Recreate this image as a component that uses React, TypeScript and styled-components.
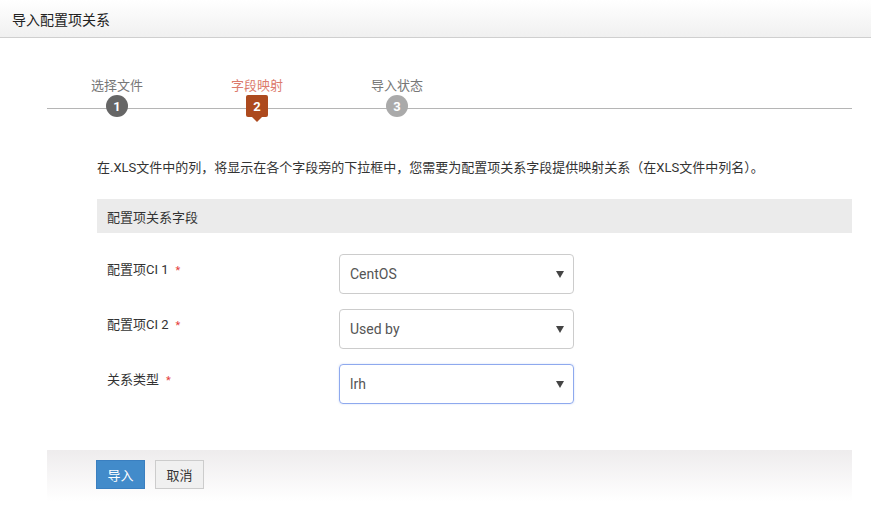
import styled, { createGlobalStyle } from "styled-components";

const GlobalStyle = createGlobalStyle`
    html, body {
        margin: 0;
        padding: 0;
        background: #fff;
        font-family: Roboto, "Noto Sans CJK SC", sans-serif;
        color: #333;
    }
`

const Page = styled.div`
    width: 871px;
    height: 531px;
    overflow: hidden;
    background: #fff;
`

const Header = styled.div`
    height: 37px;
    border-bottom: 1px solid #cfcfcf;
    background: linear-gradient(#ffffff, #f0f0f0);
    display: flex;
    align-items: center;
    padding-left: 12px;
    font-size: 14px;
    color: #222;
`

const Body = styled.div`
    padding: 0 19px 0 47px;
`

const Steps = styled.div`
    position: relative;
    display: flex;
    padding-left: 44px;
    gap: 88px;
    margin-top: 40px;
    height: 50px;

    &::before {
        content: '';
        position: absolute;
        left: 0;
        right: 0;
        top: 30px;
        height: 1px;
        background: #b5b5b5;
    }
`

const Step = styled.div`
    position: relative;
    width: 52px;
    display: flex;
    flex-direction: column;
    align-items: center;
    gap: 1px;
`

const StepLabel = styled.div<{ active?: boolean }>`
    font-size: 13px;
    line-height: 16px;
    color: ${props => props.active ? '#dc7b6c' : '#777'};
`

const StepMark = styled.div<{ bg: string; square?: boolean }>`
    position: relative;
    width: 22px;
    height: 22px;
    border-radius: ${props => props.square ? '2px' : '50%'};
    background: ${props => props.bg};
    color: #fff;
    font-size: 13px;
    font-weight: bold;
    display: flex;
    align-items: center;
    justify-content: center;

    ${props => props.square && `
        &::after {
            content: '';
            position: absolute;
            bottom: -5px;
            left: 50%;
            margin-left: -5px;
            border-left: 5px solid transparent;
            border-right: 5px solid transparent;
            border-top: 5px solid ${props.bg};
        }
    `}
`

const Content = styled.div`
    padding-left: 50px;
`

const Description = styled.p`
    margin: 31px 0 0;
    font-size: 13px;
    line-height: 18px;
    color: #333;
`

const SectionBar = styled.div`
    margin-top: 22px;
    height: 34px;
    background: #ebebeb;
    display: flex;
    align-items: center;
    padding-left: 10px;
    font-size: 13px;
    color: #333;
`

const Form = styled.div`
    display: flex;
    flex-direction: column;
    gap: 15px;
    margin-top: 21px;
`

const Row = styled.div`
    display: flex;
    align-items: flex-start;
`

const Label = styled.div`
    width: 232px;
    padding-left: 10px;
    padding-top: 5px;
    font-size: 13px;
    color: #333;
`

const Required = styled.span`
    color: #e43c3c;
    font-size: 11px;
    margin-left: 7px;
`

const SelectBox = styled.div<{ focused?: boolean }>`
    width: 214px;
    height: 38px;
    border: 1px solid ${props => props.focused ? '#8ea9ee' : '#cccccc'};
    border-radius: 4px;
    box-shadow: ${props => props.focused ? '0 0 2px rgba(102,140,233,0.35)' : 'none'};
    display: flex;
    align-items: center;
    justify-content: space-between;
    padding: 0 9px 0 10px;
    font-size: 14px;
    color: #555;
`

const Caret = styled.span`
    width: 0;
    height: 0;
    border-left: 4px solid transparent;
    border-right: 4px solid transparent;
    border-top: 7px solid #444;
`

const Footer = styled.div`
    margin-top: 46px;
    height: 51px;
    background: linear-gradient(#eeeced, #ffffff);
    display: flex;
    align-items: flex-start;
    padding: 10px 0 0 49px;
    gap: 10px;
    box-sizing: border-box;
`

const Button = styled.button<{ primary?: boolean }>`
    height: 29px;
    width: 49px;
    padding: 0;
    font-family: Roboto, "Noto Sans CJK SC", sans-serif;
    font-size: 13px;
    border: 1px solid ${props => props.primary ? '#3a7fc0' : '#cccccc'};
    background: ${props => props.primary ? '#428bca' : '#f0f0f0'};
    color: ${props => props.primary ? '#fff' : '#333'};
    border-radius: 0;
    cursor: pointer;
`

const steps = [
    { label: '选择文件', num: 1, bg: '#666666' },
    { label: '字段映射', num: 2, bg: '#ad4a1e', active: true },
    { label: '导入状态', num: 3, bg: '#aaaaaa' },
]

const fields = [
    { label: '配置项CI 1', value: 'CentOS' },
    { label: '配置项CI 2', value: 'Used by' },
    { label: '关系类型', value: 'lrh', focused: true },
]

export default function App() {
    return (
        <Page>
            <GlobalStyle />
            <Header>导入配置项关系</Header>
            <Body>
                <Steps>
                    {steps.map(s => (
                        <Step key={s.num}>
                            <StepLabel active={s.active}>{s.label}</StepLabel>
                            <StepMark bg={s.bg} square={s.active}>{s.num}</StepMark>
                        </Step>
                    ))}
                </Steps>
                <Content>
                    <Description>在.XLS文件中的列，将显示在各个字段旁的下拉框中，您需要为配置项关系字段提供映射关系（在XLS文件中列名）。</Description>
                    <SectionBar>配置项关系字段</SectionBar>
                    <Form>
                        {fields.map(f => (
                            <Row key={f.label}>
                                <Label>{f.label}<Required>*</Required></Label>
                                <SelectBox focused={f.focused}>
                                    {f.value}
                                    <Caret />
                                </SelectBox>
                            </Row>
                        ))}
                    </Form>
                </Content>
                <Footer>
                    <Button primary>导入</Button>
                    <Button>取消</Button>
                </Footer>
            </Body>
        </Page>
    )
}
